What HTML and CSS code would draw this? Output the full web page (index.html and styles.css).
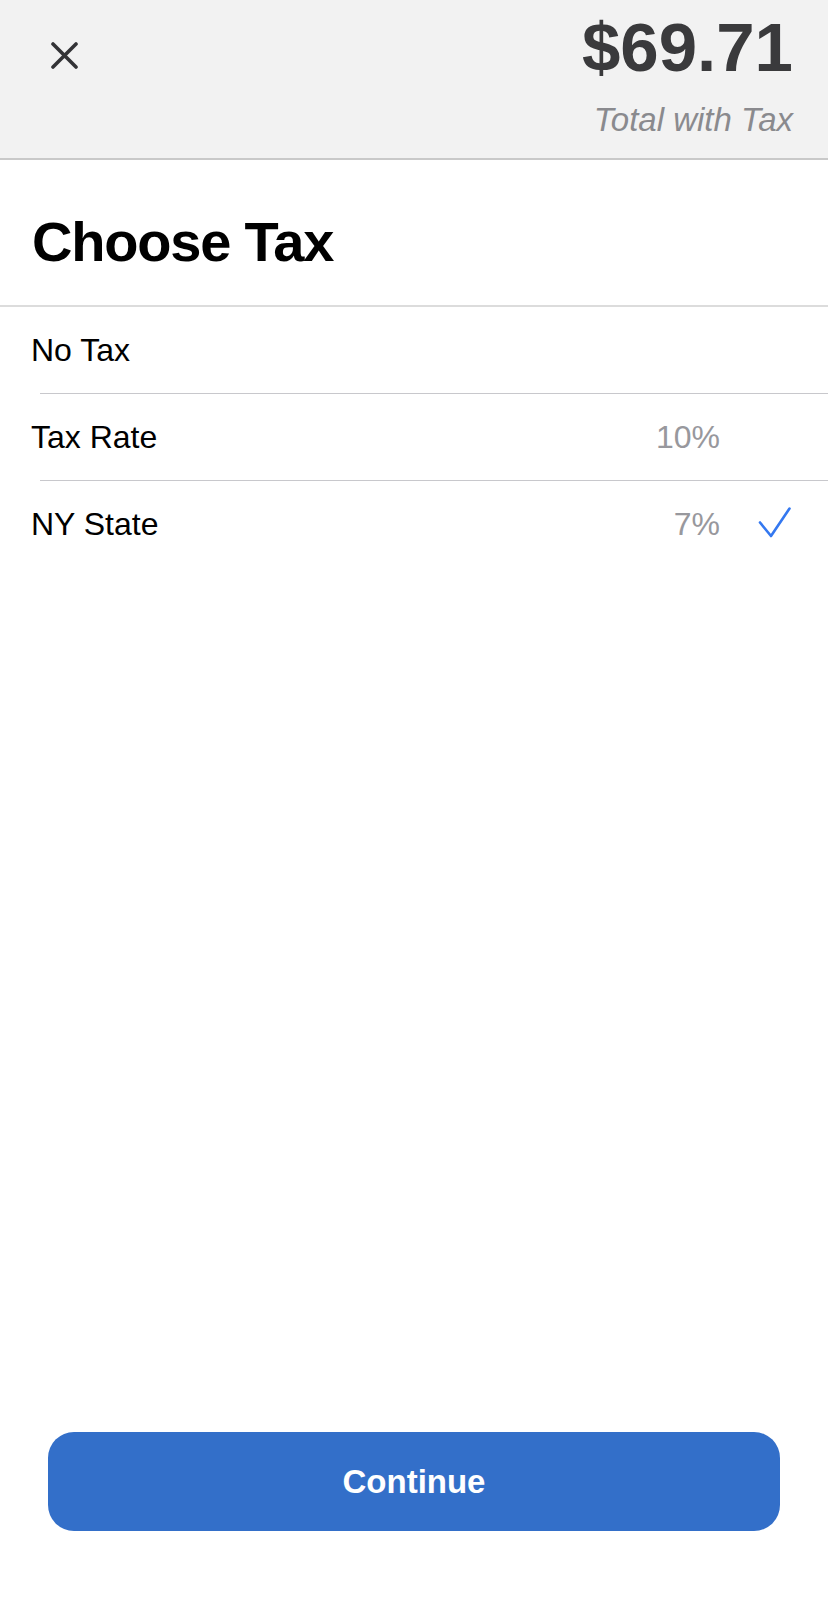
FILE: index.html
```html
<!DOCTYPE html>
<html lang="en">
<head>
<meta charset="utf-8">
<title>Choose Tax</title>
<link rel="stylesheet" href="styles.css">
</head>
<body>
<div class="page">
  <header class="topbar">
    <button class="close" aria-label="Close">
      <svg width="27" height="27" viewBox="0 0 27 27"><path d="M2 2 L25 25 M25 2 L2 25" stroke="#333336" stroke-width="3.6" stroke-linecap="round" fill="none"/></svg>
    </button>
    <div class="total">
      <div class="amount">$69.71</div>
      <div class="caption">Total with Tax</div>
    </div>
  </header>

  <section class="title-wrap">
    <h1 class="title">Choose Tax</h1>
  </section>

  <ul class="list">
    <li class="row">
      <span class="label">No Tax</span>
      <span class="value"></span>
      <span class="check-slot"></span>
    </li>
    <li class="sep"></li>
    <li class="row">
      <span class="label">Tax Rate</span>
      <span class="value">10%</span>
      <span class="check-slot"></span>
    </li>
    <li class="sep"></li>
    <li class="row">
      <span class="label">NY State</span>
      <span class="value">7%</span>
      <span class="check-slot">
        <svg width="34" height="34" viewBox="0 0 34 34"><path d="M2 15.5 L13 29 L31.5 1.5" stroke="#3478f0" stroke-width="2.6" stroke-linecap="round" stroke-linejoin="round" fill="none"/></svg>
      </span>
    </li>
  </ul>

  <div class="spacer"></div>

  <footer class="footer">
    <button class="continue">Continue</button>
  </footer>
</div>
</body>
</html>
```

FILE: styles.css
```css
* { box-sizing: border-box; }

html, body {
  margin: 0;
  padding: 0;
  background: #ffffff;
}

body {
  font-family: "Liberation Sans", Arial, sans-serif;
  color: #000;
}

.page {
  min-height: 1601px;
  display: flex;
  flex-direction: column;
}

.topbar {
  height: 160px;
  background: #f2f2f2;
  border-bottom: 2px solid #c9c9c9;
  display: flex;
  justify-content: space-between;
  align-items: flex-start;
  padding: 14px 35px 0 51px;
}

.close {
  margin-top: 28px;
  padding: 0;
  border: 0;
  background: none;
  width: 27px;
  height: 27px;
  display: flex;
}

.total {
  display: flex;
  flex-direction: column;
  align-items: flex-end;
}

.amount {
  font-size: 69px;
  line-height: 68px;
  font-weight: 700;
  color: #3a3a3c;
}

.caption {
  margin-top: 22px;
  font-size: 33px;
  line-height: 32px;
  font-style: italic;
  color: #8a8a8e;
}

.title-wrap {
  padding: 54px 32px 35px;
  border-bottom: 2px solid #dcdcdc;
}

.title {
  margin: 0;
  font-size: 56px;
  line-height: 56px;
  font-weight: 700;
  letter-spacing: -1.2px;
}

.list {
  list-style: none;
  margin: 0;
  padding: 0;
}

.row {
  height: 86px;
  display: flex;
  align-items: center;
  padding: 0 36px 0 31px;
  font-size: 32px;
}

.label {
  flex: 1;
}

.value {
  color: #98989d;
}

.check-slot {
  width: 34px;
  height: 34px;
  margin-left: 38px;
  display: flex;
}

.sep {
  height: 1px;
  margin-left: 40px;
  background: #c8c8cc;
}

.spacer {
  flex: 1;
}

.footer {
  padding: 0 48px 70px;
}

.continue {
  width: 100%;
  height: 99px;
  border: 0;
  border-radius: 26px;
  background: #336fc9;
  color: #ffffff;
  font-family: "Liberation Sans", Arial, sans-serif;
  font-size: 33px;
  font-weight: 700;
}
```
